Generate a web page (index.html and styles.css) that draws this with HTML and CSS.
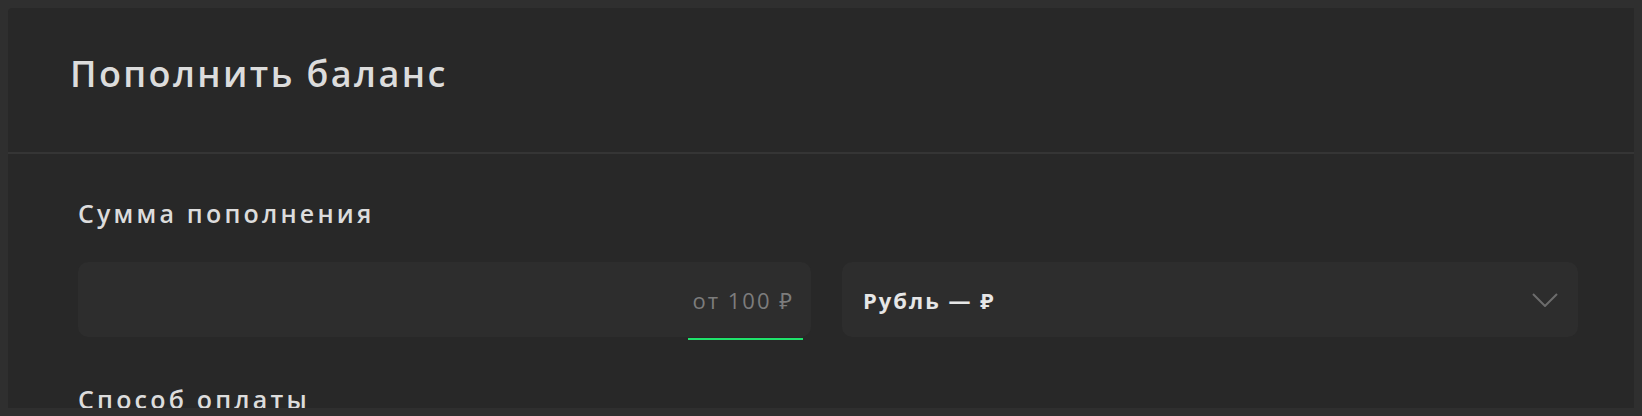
FILE: index.html
```html
<!DOCTYPE html>
<html lang="ru">
<head>
<meta charset="utf-8">
<title>Пополнить баланс</title>
<link rel="stylesheet" href="styles.css">
</head>
<body>
<div class="card">
  <div class="card-header">
    <h1 class="title">Пополнить баланс</h1>
  </div>
  <div class="card-body">
    <div class="label">Сумма пополнения</div>
    <div class="row">
      <div class="field field-amount">
        <span class="placeholder">от 100 ₽</span>
        <span class="underline"></span>
      </div>
      <div class="field field-select">
        <span class="select-value">Рубль — ₽</span>
        <svg class="chevron" width="26" height="14" viewBox="0 0 26 14" aria-hidden="true">
          <path d="M1 1 L13 13 L25 1" fill="none" stroke="#6c6c6c" stroke-width="2"/>
        </svg>
      </div>
    </div>
    <div class="label label-second">Способ оплаты</div>
  </div>
</div>
</body>
</html>
```
FILE: styles.css
```css
html, body {
  margin: 0;
  padding: 0;
}
body {
  margin: 8px;
  background: #2f2f2f;
  font-family: "Open Sans", "Noto Sans", sans-serif;
}
.card {
  height: 400px;
  background: #282828;
  border-radius: 4px 0 0 0;
  overflow: hidden;
}
.card-header {
  box-sizing: border-box;
  height: 146px;
  padding: 42px 62px 0;
  border-bottom: 2px solid #353535;
}
.title {
  margin: 0;
  font-size: 36px;
  line-height: 48px;
  font-weight: 600;
  letter-spacing: 2.4px;
  color: #dcdcdc;
}
.card-body {
  padding-left: 70px;
  max-width: 1500px;
}
.label {
  margin-top: 43px;
  font-size: 25px;
  line-height: 32px;
  font-weight: 600;
  letter-spacing: 3.2px;
  color: #dcdcdc;
}
.label-second {
  margin-top: 46px;
}
.row {
  display: flex;
  gap: 31px;
  margin-top: 33px;
}
.field {
  position: relative;
  flex: 1;
  height: 75px;
  box-sizing: border-box;
  background: #2d2d2d;
  border-radius: 10px;
  display: flex;
  align-items: center;
  padding: 0 20px 0 21px;
}
.field-amount {
  justify-content: flex-end;
  padding-right: 17px;
}
.placeholder {
  font-size: 22px;
  line-height: 30px;
  letter-spacing: 2px;
  color: #7c7c7c;
}
.underline {
  position: absolute;
  right: 8px;
  bottom: -3px;
  width: 115px;
  height: 2px;
  background: #1fe26b;
}
.field-select {
  justify-content: space-between;
}
.select-value {
  font-size: 22px;
  line-height: 30px;
  font-weight: 700;
  letter-spacing: 2px;
  color: #e6e6e6;
}
.chevron {
  display: block;
}
```
